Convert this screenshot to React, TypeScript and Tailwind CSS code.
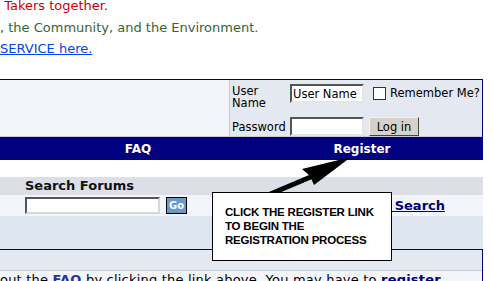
export default function App() {
  return (
    <div className="relative h-[281px] w-[494px] overflow-hidden bg-white font-['DejaVu_Sans',Verdana,sans-serif] text-[12px] text-black">
      {/* intro text */}
      <div className="-mt-[5px] text-[13px] leading-[21.5px]">
        <div className="text-[#cc0000]">&nbsp;Takers together.</div>
        <div className="text-[#336633]">, the Community, and the Environment.</div>
        <div>
          <a href="#" className="text-[#0044ee] underline">SERVICE here.</a>
        </div>
      </div>

      {/* header table */}
      <div className="mt-[19.5px] w-[483px] border-t border-r border-[#000080]">
        <div className="flex h-[57px] border-b border-[#c8ccd8]">
          <div className="w-[229px] bg-[#f4f5fa]" />
          <div className="w-px bg-[#c8ccd8]" />
          <div className="flex-1 bg-[#e3e8f1] pl-[2px] pt-[4px] text-[11.5px] leading-[12px]">
            <div className="flex items-start">
              <div className="w-[58px] pt-[1px]">User<br />Name</div>
              <input
                defaultValue="User Name"
                className="h-[19px] w-[74px] border-[2px] border-t-[#555] border-l-[#555] border-b-[#e5e5e5] border-r-[#e5e5e5] bg-white px-[1px] text-[11.5px] outline-none"
              />
              <div className="ml-[9px] mt-[3px] h-[13px] w-[13px] border border-[#333] bg-white" />
              <span className="ml-[4px] mt-[3px]">Remember Me?</span>
            </div>
            <div className="mt-[8px] flex items-center">
              <div className="w-[58px]">Password</div>
              <input className="h-[19px] w-[74px] border-[2px] border-t-[#555] border-l-[#555] border-b-[#e5e5e5] border-r-[#e5e5e5] bg-white outline-none" />
              <button className="ml-[5px] h-[19px] w-[50px] border border-t-[#f4f2ee] border-l-[#f4f2ee] border-b-[#444] border-r-[#444] bg-[#d6d2ca] text-[11.5px]">
                Log in
              </button>
            </div>
          </div>
        </div>
        <div className="flex h-[23px] items-center bg-[#000080] text-[12px] font-bold text-white">
          <div className="w-[276px] text-center">FAQ</div>
          <div className="w-[172px] text-center">Register</div>
        </div>
      </div>

      {/* search */}
      <div className="mt-[17px] w-[483px]">
        <div className="flex h-[18px] items-center bg-[#dcdfe6] pl-[25px] text-[13px] font-bold text-[#111]">
          Search Forums
        </div>
        <div className="flex h-[21px] items-center bg-[#f4f5fa] pl-[25px]">
          <input className="h-[17px] w-[135px] border-[2px] border-t-[#555] border-l-[#555] border-b-[#d8d8d8] border-r-[#d8d8d8] bg-white outline-none" />
          <button className="ml-[6px] h-[17px] w-[21px] border border-black bg-[#6699cc] text-[10px] font-bold text-white">
            Go
          </button>
          <a href="#" className="ml-auto pr-[38px] text-[13px] font-bold text-[#000080] underline">
            Advanced Search
          </a>
        </div>
        <div className="h-[33px] bg-[#dde5f0]" />
      </div>

      {/* info table */}
      <div className="w-[483px] border-t border-r border-[#000080]">
        <div className="h-[21px] border-b border-[#c8ccd8] bg-[#e3e8f1]" />
        <div className="whitespace-nowrap bg-[#f4f5fa] pt-[1px] text-[13px] leading-[16px] tracking-[0.2px]">
          out the <a href="#" className="font-bold text-[#2233aa]">FAQ</a> by clicking the link above. You may have to{' '}
          <a href="#" className="font-bold text-[#000080]">register</a>
        </div>
      </div>

      {/* annotation arrow */}
      <svg className="absolute left-0 top-0" width="494" height="281">
        <line x1="268" y1="195" x2="313" y2="176" stroke="black" strokeWidth="5" />
        <polygon points="351,157 302,169 310,176 314,185" fill="black" />
      </svg>

      {/* callout */}
      <div className="absolute left-[212px] top-[192px] h-[69px] w-[180px] border border-black bg-white pl-[12px] pt-[12px] font-['Liberation_Sans',Arial,sans-serif] text-[11.5px] font-bold leading-[14px] tracking-[-0.2px] text-black">
        CLICK THE REGISTER LINK
        <br />
        TO BEGIN THE
        <br />
        REGISTRATION PROCESS
      </div>
    </div>
  );
}
